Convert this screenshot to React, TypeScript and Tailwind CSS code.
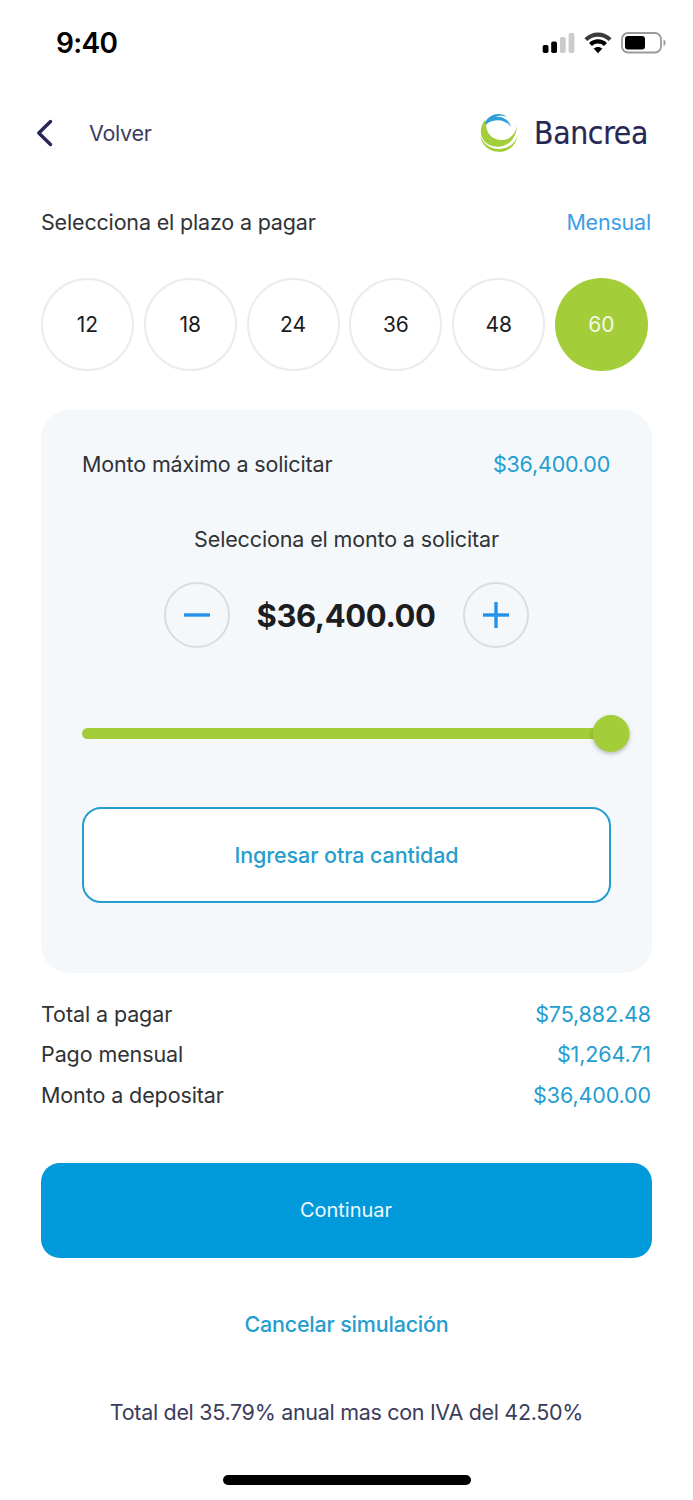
import { useState } from "react";

const TERMS = [12, 18, 24, 36, 48, 60];

const SUMMARY = [
  { label: "Total a pagar", value: "$75,882.48" },
  { label: "Pago mensual", value: "$1,264.71" },
  { label: "Monto a depositar", value: "$36,400.00" },
];

function StatusBar() {
  return (
    <div className="flex h-[86px] items-center justify-between pl-[56px] pr-[26px]">
      <span className="text-[28px] font-semibold leading-none tracking-[-0.7px] text-black">9:40</span>
      <div className="flex items-center gap-[9px]">
        <svg width="33" height="22" viewBox="0 0 33 22">
          <rect x="0.7" y="13" width="5.8" height="8" rx="1.8" fill="#000" />
          <rect x="9.2" y="9.5" width="5.8" height="11.5" rx="1.8" fill="#000" />
          <rect x="17.9" y="5" width="5.8" height="16" rx="1.8" fill="#cbcbcb" />
          <rect x="26.6" y="1" width="5.8" height="20" rx="1.8" fill="#cbcbcb" />
        </svg>
        <svg width="28" height="22" viewBox="0 0 28 22">
          <path d="M0.4 6.2C8 -1.4 20 -1.4 27.6 6.2L24.7 9.1C18.7 3.2 9.3 3.2 3.3 9.1Z" fill="#3c3c3c" />
          <path d="M5 11C10 6 18 6 23 11L20 14C16.6 10.7 11.4 10.7 8 14Z" fill="#000" />
          <path d="M9.6 16.6C12.1 14.3 15.9 14.3 18.4 16.6L14 21.2Z" fill="#000" />
        </svg>
        <svg width="46" height="22" viewBox="0 0 46 22">
          <rect x="1" y="1" width="39" height="19.5" rx="6" fill="none" stroke="#9b9b9b" strokeWidth="1.8" />
          <rect x="4" y="4" width="20" height="13.5" rx="3" fill="#000" />
          <path d="M42.5 7.4C45.3 8.6 45.3 12.8 42.5 14Z" fill="#9b9b9b" />
        </svg>
      </div>
    </div>
  );
}

function Logo() {
  return (
    <div className="flex items-center">
      <svg width="38" height="38" viewBox="0 0 38 38">
        <path d="M5 6C-1.8 14 -0.4 26.5 9.5 31C20.5 35.8 35.5 31 37.2 11.5C35 21.5 28.5 26.3 20.5 26C11.5 25.6 5.6 18.5 6.2 9Z" fill="#a3cd39" />
        <path d="M0.3 22C3.5 31 11.5 35 19.5 34.9C28 34.7 35 30 37.3 22C36 31.5 28.5 37.8 19 37.8C9.5 37.8 1.5 31.5 0.3 22Z" fill="#a3cd39" />
        <path d="M5 8.8C9 -0.6 21 -2.4 27.2 3.2C23 1.4 18.5 1.6 15.5 2.8C22.5 2 29 5.8 31 12.8C25.5 5.4 14.5 3.6 6 10.4Z" fill="#2e9fd8" />
      </svg>
      <span className="ml-[16px] pt-[2px] font-['DejaVu_Sans_Condensed','DejaVu_Sans',sans-serif] text-[31.5px] leading-none tracking-[-0.3px] text-[#272756] [font-stretch:condensed] [-webkit-text-stroke:0.2px_#272756]">
        Bancrea
      </span>
    </div>
  );
}

function StepButton({ label, onClick, plus }: { label: string; onClick: () => void; plus?: boolean }) {
  return (
    <button
      onClick={onClick}
      aria-label={label}
      className="flex size-[66px] items-center justify-center rounded-full border-2 border-[#d9dde0]"
    >
      <svg width="26" height="26" viewBox="0 0 26 26" fill="none" stroke="#2492ea" strokeWidth="3.4">
        <path d="M0 13h26" />
        {plus && <path d="M13 0v26" />}
      </svg>
    </button>
  );
}

export default function App() {
  const [term, setTerm] = useState(60);
  const [amount, setAmount] = useState(36400);
  const max = 36400;
  const formatted = "$" + amount.toLocaleString("en-US", { minimumFractionDigits: 2 });

  return (
    <div className="flex h-[1500px] w-[693px] flex-col overflow-hidden bg-white font-['Inter',sans-serif] text-[21.5px] leading-none text-[#303236]">
      <StatusBar />

      <header className="flex h-[94px] items-center justify-between pl-[36px] pr-[45px]">
        <button className="flex items-center gap-[36px] text-[#3b3c63]">
          <svg width="17" height="28" viewBox="0 0 17 28" fill="none" stroke="#272756" strokeWidth="3.4" strokeLinecap="round" strokeLinejoin="round">
            <path d="M14.5 2.5L2.8 14L14.5 25.5" />
          </svg>
          <span className="pt-[2px] tracking-[-0.3px]">Volver</span>
        </button>
        <Logo />
      </header>

      <div className="flex h-[84px] items-center justify-between px-[41px] pt-[2px]">
        <span className="tracking-[-0.17px]">Selecciona el plazo a pagar</span>
        <span className="pr-px tracking-[-0.2px] text-[#3c9de8]">Mensual</span>
      </div>

      <div className="mt-[14px] flex justify-between pl-[41px] pr-[45px]">
        {TERMS.map((t) => (
          <button
            key={t}
            onClick={() => setTerm(t)}
            className={`size-[93px] rounded-full text-[21px] ${
              t === term ? "bg-[#a3cd39] text-[#f4f9e6]" : "border-2 border-[#ececec] text-[#1c1c1e]"
            }`}
          >
            {t}
          </button>
        ))}
      </div>

      <section className="mx-[41px] mt-[39px] flex h-[563px] flex-col rounded-[28px] bg-[#f4f8fb] px-[41px] pt-[38px]">
        <div className="flex h-[32px] items-center justify-between pt-px">
          <span className="tracking-[-0.15px]">Monto máximo a solicitar</span>
          <span className="pr-px tracking-[-0.2px] text-[#259dcf]">$36,400.00</span>
        </div>
        <div className="mt-[43px] flex h-[32px] items-center justify-center pt-[2px] tracking-[-0.14px]">
          Selecciona el monto a solicitar
        </div>
        <div className="mt-[27px] flex items-center justify-center">
          <StepButton label="Disminuir" onClick={() => setAmount(Math.max(0, amount - 100))} />
          <span className="w-[233px] pr-px text-center text-[31px] font-bold tracking-[-0.4px] text-[#1c1d20]">
            {formatted}
          </span>
          <StepButton label="Aumentar" onClick={() => setAmount(Math.min(max, amount + 100))} plus />
        </div>

        {/* Slider */}
        <div className="relative mt-[67px] flex h-[37px] items-center">
          <div className="h-[11px] w-full rounded-full bg-[#a3cd39]" />
          <div
            className="absolute size-[37px] -translate-x-1/2 rounded-full bg-[#a3cd39] shadow-[0_2px_4px_rgba(0,0,0,0.25)]"
            style={{ left: `${(amount / max) * 100}%` }}
          />
        </div>

        <button className="mt-[55px] h-[96px] rounded-[19px] border-2 border-[#259dcf] bg-white pt-[2px] font-medium tracking-[-0.1px] text-[#259dcf]">
          Ingresar otra cantidad
        </button>
      </section>

      <dl className="mt-[21px] px-[41px]">
        {SUMMARY.map(({ label, value }) => (
          <div key={label} className="flex h-[40.5px] items-center justify-between">
            <dt className="tracking-[-0.1px]">{label}</dt>
            <dd className="pr-px tracking-[-0.12px] text-[#259dcf]">{value}</dd>
          </div>
        ))}
      </dl>

      <button className="mx-[41px] mt-[47px] h-[95px] shrink-0 rounded-[19px] bg-[#0099da] pr-px text-[20px] text-[#eef8fd]">
        Continuar
      </button>

      <button className="mt-[50px] h-[32px] pt-[2px] font-medium tracking-[-0.2px] text-[#259dcf]">
        Cancelar simulación
      </button>

      <p className="mt-[57px] flex h-[32px] items-center justify-center pt-px tracking-[-0.31px] text-[#3b3c5c]">
        Total del 35.79% anual mas con IVA del 42.50%
      </p>

      <div className="mx-auto mt-[46px] h-[10px] w-[248px] shrink-0 rounded-full bg-black" />
    </div>
  );
}
